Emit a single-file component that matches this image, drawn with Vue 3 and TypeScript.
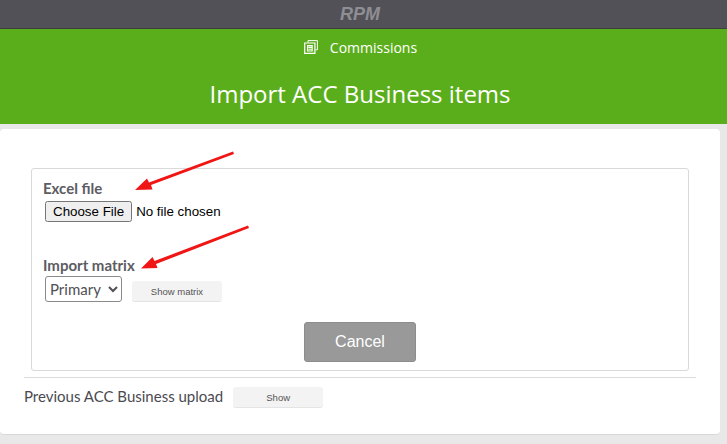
<template>
  <div class="page">
    <header class="topbar"><span class="brand">RPM</span></header>
    <section class="banner">
      <div class="crumb">
        <svg class="crumb-icon" viewBox="0 0 14 14" width="14" height="14" fill="none" stroke="#fff" stroke-width="1">
          <path d="M4 2.5V.6h9.4v9.2h-1.8" />
          <path d="M.7 3h10.2v10.4H.7z" stroke-width="1.2" />
          <path d="M3.6 5.6h4.6v5.4H3.6zM4.4 7.4h3.2M4.4 9.2h3.2" stroke-width="1.1" />
        </svg>
        <span>Commissions</span>
      </div>
      <h1 class="title">Import ACC Business items</h1>
    </section>
    <main class="card">
      <form class="box" @submit.prevent>
        <label class="field-label">Excel file</label>
        <input class="file" type="file" />
        <label class="field-label matrix-label">Import matrix</label>
        <div class="matrix-row">
          <select class="matrix">
            <option v-for="m in matrices" :key="m">{{ m }}</option>
          </select>
          <button class="small-btn matrix-btn" type="button">Show matrix</button>
        </div>
        <div class="actions">
          <button class="cancel" type="button">Cancel</button>
        </div>
      </form>
      <hr class="rule" />
      <div class="previous">
        <span class="previous-text">Previous ACC Business upload</span>
        <button class="small-btn show-btn" type="button">Show</button>
      </div>
    </main>
    <svg class="arrows" width="727" height="444" viewBox="0 0 727 444">
      <g fill="#f01616">
        <path d="M233 151.5 L234 154 L151 185 L152.5 189.5 L135 190 L147 178.5 L149 182.5 Z" />
        <path d="M248 225.5 L249 228 L156 264 L157.5 268 L141 268.5 L152.5 257 L154.5 261 Z" />
      </g>
    </svg>
  </div>
</template>

<script setup lang="ts">
const matrices: string[] = ['Primary', 'Secondary']
</script>

<style scoped>
.page {
  position: relative;
  width: 727px;
  height: 444px;
  overflow: hidden;
  background: #e8e8e8;
  font-family: Lato, "Liberation Sans", sans-serif;
}
.topbar {
  height: 28px;
  box-sizing: content-box;
  padding-right: 7px;
  width: 720px;
  background: #525157;
  border-bottom: 1px solid #3e3e42;
  display: flex;
  justify-content: center;
  align-items: center;
}
.brand {
  font: italic bold 18px "Liberation Sans", Arial, sans-serif;
  color: #8e8e93;
}
.banner {
  height: 95px;
  padding-right: 7px;
  background: #5bae1b;
  color: #fff;
  text-align: center;
  font-family: "Open Sans", "Noto Sans", sans-serif;
  overflow: hidden;
}
.crumb {
  display: flex;
  justify-content: center;
  align-items: center;
  gap: 12px;
  height: 20px;
  margin-top: 8px;
  font-size: 14px;
}
.crumb-icon { margin-left: 1px; }
.title {
  margin: 20px 0 0;
  font-size: 24px;
  font-weight: 400;
  line-height: 34px;
}
.card {
  margin: 5px 7px 0 0;
  height: 306px;
  box-sizing: border-box;
  padding: 39px 24px 0 24px;
  background: #fff;
  border-radius: 4px;
  border-bottom: 1px solid #d8d8d8;
}
.box {
  box-sizing: border-box;
  width: 658px;
  height: 203px;
  margin-left: 7px;
  padding: 9px 11px 0;
  border: 1px solid #d9d9d9;
  border-radius: 3px;
  display: flex;
  flex-direction: column;
  align-items: flex-start;
}
.field-label {
  font-size: 15px;
  line-height: 20px;
  font-weight: 700;
  color: #5c5c62;
}
.file {
  margin: 3px 0 0 2px;
  font: 13.33px "Liberation Sans", Arial, sans-serif;
  color: #000;
}
.matrix-label { margin-top: 33px; }
.matrix-row {
  display: flex;
  align-items: flex-start;
  gap: 10px;
  margin: 1px 0 0 2px;
}
.matrix {
  width: 77px;
  height: 26px;
  font: 15px Lato, sans-serif;
  color: #4f4f55;
  background: #fff;
  border: 1px solid #8a8a8a;
  border-radius: 3px;
}
.small-btn {
  height: 21px;
  padding: 0;
  border: 0;
  border-bottom: 1px solid #e4e4e4;
  border-radius: 3px;
  background: #f3f3f3;
  color: #555;
  font: 9.5px "Liberation Sans", Arial, sans-serif;
}
.matrix-btn { width: 90px; margin-top: 5px; }
.actions {
  align-self: stretch;
  display: flex;
  justify-content: center;
  margin-top: 20px;
}
.cancel {
  width: 112px;
  height: 40px;
  border: 1px solid #8d8d8d;
  border-radius: 3px;
  background: #999;
  color: #fff;
  font: 16px "Liberation Sans", Arial, sans-serif;
}
.rule {
  width: 672px;
  margin: 6px 0 0;
  border: 0;
  border-top: 1px solid #dcdcdc;
}
.previous {
  display: flex;
  align-items: flex-start;
  gap: 10px;
  margin-top: 9px;
  font-size: 15px;
  color: #4a4a50;
}
.previous-text { line-height: 18px; }
.show-btn { width: 90px; }
.arrows {
  position: absolute;
  left: 0;
  top: 0;
  pointer-events: none;
}
</style>

<style>
html, body { margin: 0; background: #e8e8e8; }
</style>
